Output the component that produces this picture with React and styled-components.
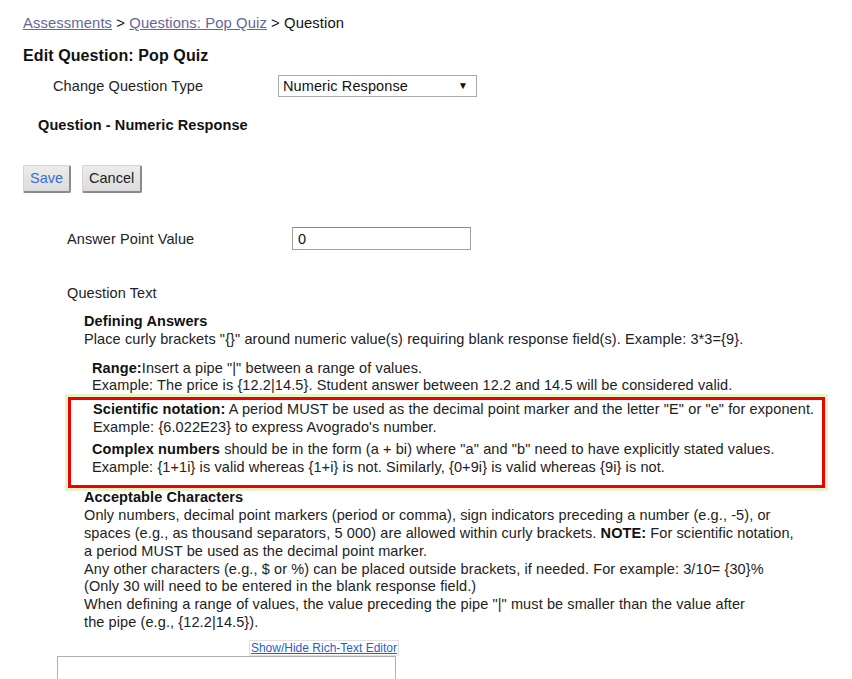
import React from 'react';
import styled, { createGlobalStyle } from 'styled-components';

const GlobalStyle = createGlobalStyle`
  body {
    margin: 0;
    background: #fff;
    font-family: "Liberation Sans", Arial, sans-serif;
    font-size: 14.5px;
    letter-spacing: 0.1px;
    color: #222;
  }
`;

const App = () => {
  return (
    <Page>
      <GlobalStyle />
      <Breadcrumb>
        <a href="#">Assessments</a> &gt; <a href="#">Questions: Pop Quiz</a> &gt; Question
      </Breadcrumb>
      <Title>Edit Question: Pop Quiz</Title>
      <FieldRow indent={30} mt={10}>
        <FieldLabel>Change Question Type</FieldLabel>
        <Select>
          Numeric Response
          <Arrow>▼</Arrow>
        </Select>
      </FieldRow>
      <SubTitle>Question - Numeric Response</SubTitle>

      <Buttons>
        <Button primary>Save</Button>
        <Button>Cancel</Button>
      </Buttons>

      <FieldRow indent={44} mt={34}>
        <FieldLabel>Answer Point Value</FieldLabel>
        <TextInput>0</TextInput>
      </FieldRow>
      <Label>Question Text</Label>

      <Help>
        <Block indent={61} mt={11}>
          <b>Defining Answers</b>
          <br />
          Place curly brackets "{'{}'}" around numeric value(s) requiring blank response field(s). Example: 3*3={'{9}'}.
        </Block>
        <Block indent={69} mt={11}>
          <b>Range:</b>Insert a pipe "|" between a range of values.
          <br />
          Example: The price is {'{12.2|14.5}'}. Student answer between 12.2 and 14.5 will be considered valid.
        </Block>
        <Highlight>
          <Block indent={22} mt={0}>
            <b>Scientific notation:</b> A period MUST be used as the decimal point marker and the letter "E" or "e" for exponent.
            <br />
            Example: {'{6.022E23}'} to express Avogrado's number.
          </Block>
          <Block indent={21} mt={4}>
            <b>Complex numbers</b> should be in the form (a + bi) where "a" and "b" need to have explicitly stated values.
            <br />
            Example: {'{1+1i}'} is valid whereas {'{1+i}'} is not. Similarly, {'{0+9i}'} is valid whereas {'{9i}'} is not.
          </Block>
        </Highlight>
        <Block indent={61} mt={1}>
          <b>Acceptable Characters</b>
          <br />
          Only numbers, decimal point markers (period or comma), sign indicators preceding a number (e.g., -5), or
          <br />
          spaces (e.g., as thousand separators, 5 000) are allowed within curly brackets. <b>NOTE:</b> For scientific notation,
          <br />
          a period MUST be used as the decimal point marker.
          <br />
          Any other characters (e.g., $ or %) can be placed outside brackets, if needed. For example: 3/10= {'{30}'}%
          <br />
          (Only 30 will need to be entered in the blank response field.)
          <br />
          When defining a range of values, the value preceding the pipe "|" must be smaller than the value after
          <br />
          the pipe (e.g., {'{12.2|14.5}'}).
        </Block>
      </Help>

      <Editor>
        <EditorToggle href="#">Show/Hide Rich-Text Editor</EditorToggle>
        <EditorBox />
      </Editor>
    </Page>
  );
};

export default App;

const Page = styled.div`
  padding: 14px 0 0 23px;
  height: 665px;
  overflow: hidden;
  line-height: 18px;
`;

const Breadcrumb = styled.div`
  font-size: 14.8px;
  color: #111;

  a {
    color: #66669c;
    text-decoration: underline;
  }
`;

const Title = styled.div`
  margin-top: 15px;
  font-size: 16px;
  font-weight: bold;
  color: #111;
`;

const FieldRow = styled.div`
  display: flex;
  align-items: center;
  margin-top: ${(p) => p.mt}px;
  padding-left: ${(p) => p.indent}px;
`;

const FieldLabel = styled.span`
  width: 225px;
`;

const Select = styled.div`
  box-sizing: border-box;
  position: relative;
  width: 199px;
  height: 22px;
  border: 1px solid #a9a9a9;
  padding: 1px 4px;
  line-height: 18px;
  color: #111;
`;

const Arrow = styled.span`
  position: absolute;
  right: 8px;
  top: 1px;
  font-size: 10px;
  color: #111;
`;

const SubTitle = styled.div`
  margin-top: 19px;
  padding-left: 15px;
  font-weight: bold;
  color: #111;
`;

const Buttons = styled.div`
  display: flex;
  gap: 11px;
  margin-top: 31px;
`;

const Button = styled.button`
  box-sizing: border-box;
  height: 28px;
  padding: 0 6px 2px;
  font-family: "Liberation Sans", Arial, sans-serif;
  font-size: 14.5px;
  color: ${(p) => (p.primary ? '#3a6fd0' : '#222')};
  background: linear-gradient(#ececec, #dcdcdc);
  border: 1px solid #d4d4d4;
  border-right: 2px solid #8a8a8a;
  border-bottom: 2px solid #8a8a8a;
  border-radius: 2px;
`;

const TextInput = styled.div`
  box-sizing: border-box;
  width: 179px;
  height: 23px;
  border: 1px solid #a0a0a0;
  border-top-color: #8a8a8a;
  padding: 2px 5px;
  line-height: 18px;
  color: #111;
`;

const Label = styled.div`
  margin-top: 34px;
  padding-left: 44px;
`;

const Help = styled.div`
  line-height: 17.8px;
`;

const Block = styled.div`
  margin-top: ${(p) => p.mt}px;
  padding-left: ${(p) => p.indent}px;

  b {
    color: #111;
  }
`;

const Highlight = styled.div`
  box-sizing: border-box;
  width: 757px;
  margin: 2px 0 0 45px;
  padding: 1px 0 9px;
  border: 3px solid #f00000;
  box-shadow: 0 0 0 3px #e4f5c8;
`;

const Editor = styled.div`
  display: flex;
  flex-direction: column;
  align-items: flex-end;
  width: 342px;
  margin: 8px 0 0 34px;
`;

const EditorToggle = styled.a`
  font-size: 12px;
  letter-spacing: 0;
  line-height: 14px;
  color: #1f5fd0;
  text-decoration: underline;
  border: 1px solid #e0e0e0;
  padding: 0 1px;
`;

const EditorBox = styled.div`
  box-sizing: border-box;
  align-self: flex-start;
  width: 339px;
  height: 40px;
  margin-top: 0;
  border: 1px solid #b0b0b0;
`;
